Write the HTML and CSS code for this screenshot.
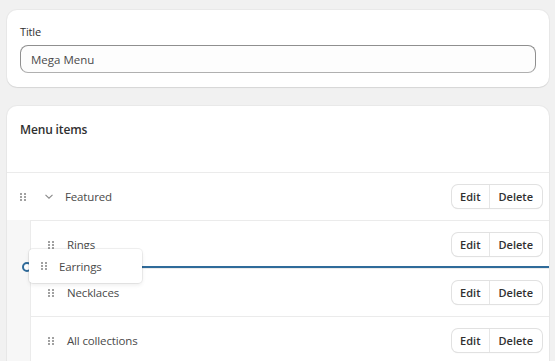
FILE: index.html
```html
<!DOCTYPE html>
<html lang="en">
<head>
    <meta charset="UTF-8">
    <meta name="viewport" content="width=device-width, initial-scale=1.0">
    <title>Mega Menu</title>
    <link rel="stylesheet" href="styles.css">
</head>
<body>
    <div class="card title-card">
        <label class="label" for="title">Title</label>
        <input class="input" id="title" type="text" value="Mega Menu">
    </div>

    <div class="card menu-card">
        <div class="menu-head">Menu items</div>

        <div class="row top-row">
            <svg class="handle" width="6" height="8" viewBox="0 0 6 8"><g fill="#8a8a8a"><rect x="0" y="0" width="2" height="2"/><rect x="4" y="0" width="2" height="2"/><rect x="0" y="3" width="2" height="2"/><rect x="4" y="3" width="2" height="2"/><rect x="0" y="6" width="2" height="2"/><rect x="4" y="6" width="2" height="2"/></g></svg>
            <svg class="chevron" width="8" height="5" viewBox="0 0 8 5"><path d="M0.5 0.8l3.5 3.4 3.5-3.4" fill="none" stroke="#8a8a8a" stroke-width="1.1"/></svg>
            <span class="name">Featured</span>
            <div class="btn-group"><button class="btn">Edit</button><button class="btn">Delete</button></div>
        </div>

        <div class="children">
            <div class="child-list">
                <div class="row">
                    <svg class="handle" width="6" height="8" viewBox="0 0 6 8"><g fill="#8a8a8a"><rect x="0" y="0" width="2" height="2"/><rect x="4" y="0" width="2" height="2"/><rect x="0" y="3" width="2" height="2"/><rect x="4" y="3" width="2" height="2"/><rect x="0" y="6" width="2" height="2"/><rect x="4" y="6" width="2" height="2"/></g></svg>
                    <span class="name">Rings</span>
                    <div class="btn-group"><button class="btn">Edit</button><button class="btn">Delete</button></div>
                </div>
                <div class="row">
                    <svg class="handle" width="6" height="8" viewBox="0 0 6 8"><g fill="#8a8a8a"><rect x="0" y="0" width="2" height="2"/><rect x="4" y="0" width="2" height="2"/><rect x="0" y="3" width="2" height="2"/><rect x="4" y="3" width="2" height="2"/><rect x="0" y="6" width="2" height="2"/><rect x="4" y="6" width="2" height="2"/></g></svg>
                    <span class="name">Necklaces</span>
                    <div class="btn-group"><button class="btn">Edit</button><button class="btn">Delete</button></div>
                </div>
                <div class="row">
                    <svg class="handle" width="6" height="8" viewBox="0 0 6 8"><g fill="#8a8a8a"><rect x="0" y="0" width="2" height="2"/><rect x="4" y="0" width="2" height="2"/><rect x="0" y="3" width="2" height="2"/><rect x="4" y="3" width="2" height="2"/><rect x="0" y="6" width="2" height="2"/><rect x="4" y="6" width="2" height="2"/></g></svg>
                    <span class="name">All collections</span>
                    <div class="btn-group"><button class="btn">Edit</button><button class="btn">Delete</button></div>
                </div>
            </div>

            <!-- drag in progress -->
            <div class="drop-line"><span class="drop-dot"></span></div>
            <div class="drag-preview">
                <svg class="handle" width="6" height="8" viewBox="0 0 6 8"><g fill="#8a8a8a"><rect x="0" y="0" width="2" height="2"/><rect x="4" y="0" width="2" height="2"/><rect x="0" y="3" width="2" height="2"/><rect x="4" y="3" width="2" height="2"/><rect x="0" y="6" width="2" height="2"/><rect x="4" y="6" width="2" height="2"/></g></svg>
                <span class="name">Earrings</span>
            </div>
        </div>
    </div>
</body>
</html>
```

FILE: styles.css
```css
body { margin: 0; padding: 10px 6px 0 7px; background: #f1f1f1; font-family: "Open Sans", "Noto Sans", sans-serif; font-size: 11.5px; letter-spacing: -0.15px; color: #4a4a4a; overflow: hidden; }
.card { background: #fff; border-radius: 10px; box-shadow: 0 1px 1px rgba(0,0,0,.08), 0 0 0 1px rgba(0,0,0,.03); }
.title-card { padding: 14px 13px 14px 13px; display: flex; flex-direction: column; }
.label { font-size: 11px; color: #303030; line-height: 16px; margin-bottom: 5px; }
.input { height: 28px; box-sizing: border-box; border: 1px solid #8f8f8f; border-bottom-color: #b0b0b0; border-radius: 8px; background: #fdfdfd; padding: 0 10px; font: inherit; color: #4a4a4a; outline: none; }
.menu-card { margin-top: 19px; border-radius: 10px 10px 0 0; }
.menu-head { height: 66px; padding: 15px 13px 0; box-sizing: border-box; font-weight: 600; color: #303030; font-size: 12px; }
.row { height: 47px; display: flex; align-items: center; border-top: 1px solid #ebebeb; padding: 0 7px 0 17px; }
.top-row { padding-left: 13px; }
.handle { flex-shrink: 0; opacity: .8; }
.chevron { margin-left: 19px; }
.name { margin-left: 13px; }
.top-row .name { margin-left: 12px; }
.btn-group { margin-left: auto; display: flex; border-radius: 6px; box-shadow: 0 0 0 1px #e1e1e1, 0 1px 1px rgba(0,0,0,.15); background: #fff; }
.btn { height: 23px; border: 0; background: none; font: inherit; font-size: 11px; font-weight: 600; color: #303030; padding: 0 8px; }
.btn + .btn { border-left: 1px solid #e6e6e6; padding: 0 9px; }
.children { position: relative; background: #f7f7f7; padding-left: 23px; }
.child-list { background: #fff; border-left: 1px solid #ebebeb; }
.drop-line { position: absolute; left: 17px; right: 0; top: 46px; height: 2px; background: #2f6b9a; }
.drop-dot { position: absolute; left: -2px; top: -4px; width: 6px; height: 6px; border: 2px solid #2f6b9a; border-radius: 50%; background: #fff; }
.drag-preview { position: absolute; left: 22px; top: 29px; width: 113px; height: 34px; box-sizing: border-box; display: flex; align-items: center; padding-left: 12px; background: #fff; border-radius: 4px; box-shadow: 0 0 0 1px rgba(0,0,0,.06), 0 2px 4px rgba(0,0,0,.08); }
.drag-preview .name { margin-left: 12px; }
```
